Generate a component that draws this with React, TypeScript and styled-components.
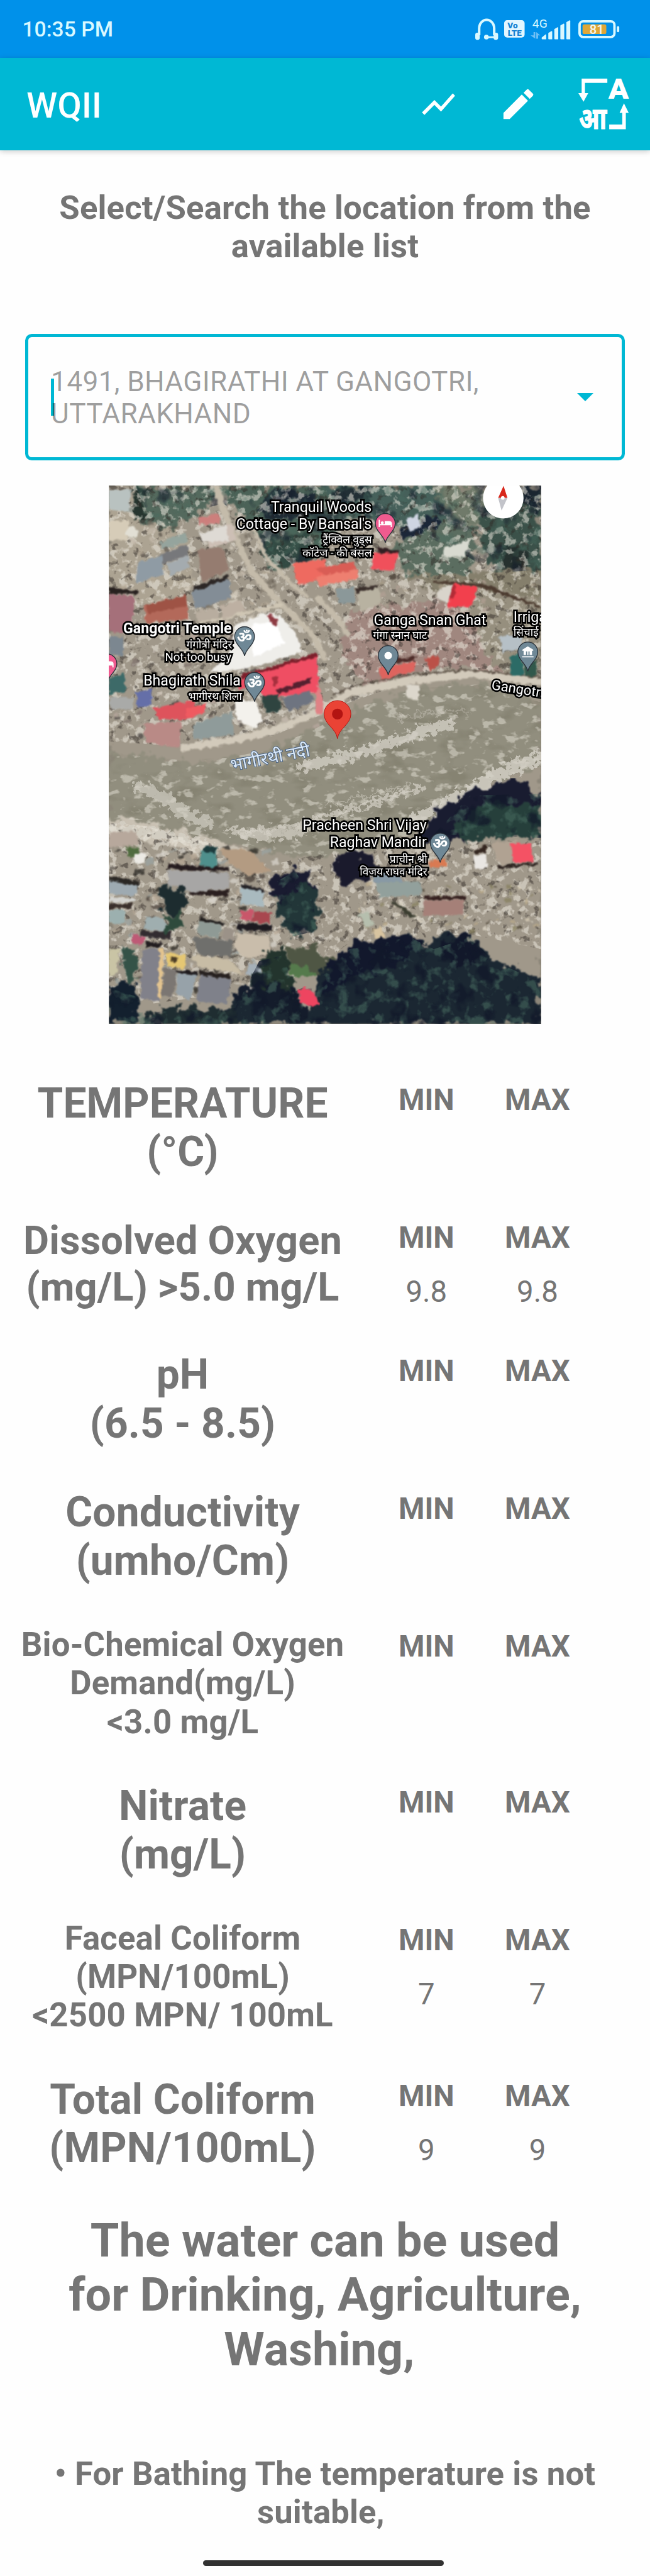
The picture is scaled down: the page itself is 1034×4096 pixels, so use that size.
import React from "react";
import styled, { createGlobalStyle, css } from "styled-components";

/* Every length is given in device pixels of a 1080 wide phone and scaled to the page. */
const SCALE = 1034 / 1080;
const u = (n: number) => `${+(n * SCALE).toFixed(3)}px`;

const sans = `Roboto, "Noto Sans", "Noto Sans Devanagari", "Lohit Devanagari", sans-serif`;

const GlobalStyle = createGlobalStyle`
  html, body { margin: 0; padding: 0; background: #fefefe; }
  body { font-family: ${sans}; color: #757575; }
`;

const Page = styled.main`
  display: flex;
  flex-direction: column;
  align-items: center;
  width: 1034px;
  height: 4096px;
  overflow: hidden;
  background: #fefefe;
`;

/* ---------- bars ---------- */

const StatusBar = styled.header`
  box-sizing: border-box;
  display: flex;
  align-items: center;
  justify-content: space-between;
  align-self: stretch;
  flex: none;
  height: ${u(96)};
  padding: 0 ${u(51)} 0 ${u(37)};
  background: #0091ea;
  color: #d9f8ff;
`;

const Clock = styled.span`
  padding-top: ${u(1)};
  font-size: ${u(35)};
  font-weight: 500;
  line-height: 1;
  letter-spacing: ${u(0.1)};
`;

const StatusIcons = styled.div`
  display: flex;
  align-items: center;
  gap: ${u(10)};
`;

const Glyph = styled.svg<{ $w: number; $h: number }>`
  display: block;
  flex: none;
  width: ${(p) => u(p.$w)};
  height: ${(p) => u(p.$h)};
  overflow: visible;
`;

const AppBar = styled.nav`
  box-sizing: border-box;
  display: flex;
  align-items: center;
  align-self: stretch;
  flex: none;
  height: ${u(154)};
  padding: 0 ${u(35.5)} 0 ${u(44)};
  background: #00b8d4;
  color: #fff;
  box-shadow: 0 ${u(2)} ${u(9)} rgba(0, 0, 0, 0.2);
`;

const Title = styled.h1`
  flex: 1;
  margin: 0;
  padding-top: ${u(6)};
  font-size: ${u(58)};
  font-weight: 500;
  line-height: 1.17;
  letter-spacing: ${u(0.4)};
`;

const Actions = styled.div`
  display: flex;
  align-items: center;
  gap: ${u(66.5)};
`;

/* ---------- search ---------- */

const Prompt = styled.h2`
  width: ${u(960)};
  margin: ${u(63)} 0 ${u(114)};
  font-size: ${u(55)};
  font-weight: 700;
  line-height: ${u(64)};
  letter-spacing: ${u(0.18)};
  text-align: center;
`;

const Field = styled.div`
  box-sizing: border-box;
  position: relative;
  display: flex;
  align-items: center;
  justify-content: space-between;
  flex: none;
  width: ${u(997)};
  height: ${u(210)};
  padding: 0 ${u(47)} 0 ${u(38)};
  border: ${u(5.5)} solid #00b8d4;
  border-radius: ${u(11)};
`;

const Hint = styled.span`
  position: relative;
  width: ${u(780)};
  padding-top: ${u(3)};
  font-size: ${u(46.3)};
  line-height: ${u(54)};
  letter-spacing: ${u(0.3)};
  color: rgba(0, 0, 0, 0.38);
`;

const Caret = styled.i`
  position: absolute;
  left: ${u(38)};
  top: ${u(68.5)};
  width: ${u(5.5)};
  height: ${u(62)};
  background: #00b8d4;
`;

const Arrow = styled.i`
  width: 0;
  height: 0;
  border: ${u(13.75)} solid transparent;
  border-top-color: #00b8d4;
  border-bottom-width: 0;
`;

/* ---------- map ---------- */

const MapFrame = styled.section`
  position: relative;
  flex: none;
  width: ${u(718)};
  height: ${u(894)};
  margin: ${u(41)} 0 ${u(92)};
  overflow: hidden;
  background: #8d877a;
`;

const MapLabel = styled.span<{
  $left?: number;
  $right?: number;
  $base: number;
  $size: number;
  $weight?: number;
  $turn?: number;
  $river?: boolean;
}>`
  position: absolute;
  ${(p) =>
    p.$right !== undefined
      ? css`right: ${u(718 - p.$right)};`
      : css`left: ${u(p.$left ?? 0)};`}
  top: ${(p) => u(p.$base - 0.9277 * p.$size)};
  font-size: ${(p) => u(p.$size)};
  font-weight: ${(p) => p.$weight ?? 400};
  line-height: 1.1719;
  white-space: nowrap;
  color: ${(p) => (p.$river ? "#dcebfb" : "#fff")};
  -webkit-text-stroke: ${(p) => (p.$river ? `${u(2)} #4a6282` : `${u(5.5)} #000`)};
  paint-order: stroke fill;
  stroke-linejoin: round;
  transform-origin: 0 80%;
  transform: rotate(${(p) => p.$turn ?? 0}deg);
`;

/* ---------- readings ---------- */

const Readings = styled.section`
  display: flex;
  flex-direction: column;
  align-self: stretch;
  gap: ${u(67)};
`;

const Row = styled.article`
  display: grid;
  grid-template-columns: ${u(607)} ${u(203)} ${u(166)};
  align-items: start;
`;

const Label = styled.h3<{ $size: number; $line: number }>`
  margin: 0;
  font-size: ${(p) => u(p.$size)};
  line-height: ${(p) => u(p.$line)};
  font-weight: 700;
  letter-spacing: ${u(0.15)};
  text-align: center;
  white-space: pre;
`;

const Column = styled.div`
  display: flex;
  flex-direction: column;
  align-items: center;
  gap: ${u(32)};
  padding-top: ${u(6.5)};
  font-size: ${u(49.5)};
  line-height: ${u(58)};
  height: ${u(148)};
  box-sizing: border-box;
`;

const Head = styled.strong`
  font-weight: 700;
`;

/* ---------- verdict ---------- */

const Verdict = styled.p<{ $size: number; $line: number; $top: number; $track?: number }>`
  flex: none;
  margin: ${(p) => u(p.$top)} 0 0;
  font-size: ${(p) => u(p.$size)};
  line-height: ${(p) => u(p.$line)};
  font-weight: 700;
  letter-spacing: ${(p) => u(p.$track ?? 0)};
  text-align: center;
  white-space: pre;
`;

const HomeBar = styled.div`
  flex: none;
  width: ${u(400)};
  height: ${u(10)};
  margin: ${u(46.5)} ${u(6)} 0 0;
  border-radius: ${u(5)};
  background: #313131;
`;

/* ---------- icons ---------- */

const Headset = () => (
  <Glyph $w={38} $h={36} viewBox="0 0 38 36">
    <path d="M6.500 28V17a12.500 14.500 0 0 1 25 0V28" fill="none" stroke="#d9f8ff" strokeWidth="4.200" />
    <rect x="0" y="24" width="7.500" height="12" rx="3.500" fill="#d9f8ff" />
    <rect x="30.500" y="24" width="7.500" height="12" rx="3.500" fill="#d9f8ff" />
    <path d="M19 31.500H33" stroke="#d9f8ff" strokeWidth="3" />
    <circle cx="18.500" cy="31.300" r="4" fill="#d9f8ff" />
  </Glyph>
);

const Volte = () => (
  <Glyph $w={34} $h={29} viewBox="0 0 34 29">
    <rect width="34" height="29" rx="5" fill="#e3f6ff" />
    <g fill="#1683d3" fontFamily={sans} fontWeight="900" fontSize="13">
      <text x="5.500" y="13.500" textLength="17" lengthAdjust="spacingAndGlyphs">Vo</text>
      <text x="6" y="26" textLength="23" lengthAdjust="spacingAndGlyphs">LTE</text>
    </g>
  </Glyph>
);

const Signal = () => (
  <Glyph $w={69.8} $h={34} viewBox="0 0 69.8 34">
    <text x="3" y="15" fontFamily={sans} fontSize="20" fill="#d9f8ff" textLength="25" lengthAdjust="spacingAndGlyphs">4G</text>
    <g fill="#6fc0f5">
      <path d="M5 22h2.800v11L0 27.500h5z" />
      <path d="M9.500 22l6.500 5.500h-3.500V33H9.500z" />
    </g>
    <g fill="#d9f8ff">
      <path d="M18.500 31l6-5q1.500-1 1.500 1v7H19.500q-1 0-1-1z" />
      <path d="M29.500 23.500l5-3q1.500-.5 1.500 1V34H30.500q-1 0-1-1z" />
      <path d="M39.500 17l5-3q1.500-.5 1.500 1V34H40.500q-1 0-1-1z" />
      <path d="M49.500 11l5-3q1.500-.5 1.500 1V34H50.500q-1 0-1-1z" />
      <path d="M59.500 5.500l5-3q1.500-.5 1.500 1V34H60.500q-1 0-1-1z" />
    </g>
  </Glyph>
);

const Battery = () => (
  <Glyph $w={68} $h={30} viewBox="0 0 68 30">
    <rect x="2" y="2" width="58" height="26" rx="6" fill="none" stroke="#d9f8ff" strokeWidth="4" />
    <rect x="7" y="7" width="39.500" height="16" rx="3" fill="#dfa737" />
    <rect x="64" y="10" width="4" height="10" rx="2" fill="#d9f8ff" />
    <text x="18.500" y="23.500" fontFamily={sans} fontWeight="500" fontSize="22" fill="#f3f6ee" textLength="24" lengthAdjust="spacingAndGlyphs">81</text>
  </Glyph>
);

const Trend = () => (
  <Glyph $w={66} $h={66} viewBox="0 0 24 24">
    <path fill="#fff" d="M3.500 18.490l6-6.010 4 4L22 6.920l-1.410-1.410-7.090 7.970-4-4L2 16.990z" />
  </Glyph>
);

const Pencil = () => (
  <Glyph $w={66} $h={66} viewBox="0 0 24 24">
    <path fill="#fff" d="M3 17.250V21h3.750L17.810 9.940l-3.750-3.750L3 17.250zM20.710 7.040a.996.996 0 0 0 0-1.410l-2.340-2.340a.996.996 0 0 0-1.410 0l-1.830 1.830 3.750 3.750 1.830-1.830z" />
  </Glyph>
);

const Translate = () => (
  <Glyph $w={84} $h={84} viewBox="0 0 84 84">
    <g fill="#fff">
      <path d="M5.500 0H48.200V7H11V24H16.500L8.600 38.300 0 24H5.500z" />
      <path d="M75.800 41L83.700 57H78.900V84H51.300V76.300H73V57H68.500z" />
      <text x="50" y="33" fontFamily={sans} fontWeight="900" fontSize="46.500" textLength="34" lengthAdjust="spacingAndGlyphs">A</text>
      <text x="1" y="83.500" fontFamily={sans} fontWeight="700" fontSize="51" stroke="#fff" strokeWidth="1.200" textLength="46" lengthAdjust="spacingAndGlyphs">आ</text>
    </g>
  </Glyph>
);

/* ---------- terrain ---------- */

type Shape = [fill: string, points: string];

const GROUND: Shape[] = [
  ["#a0988a", "0,0 718,0 718,894 0,894"],
  ["#aca392", "0,20 60,30 130,80 140,180 60,200 0,190"],
  ["#54695d", "40,0 190,0 150,50 90,70 50,60"],
  ["#26352f", "40,0 62,0 60,50 44,62 36,40"],
  ["#4b6257", "190,0 420,0 400,60 330,130 270,140 235,60 200,30"],
  ["#1f2b35", "262,8 300,2 345,20 330,60 275,62 250,40"],
  ["#334a43", "255,90 330,80 345,120 290,140 262,120"],
  ["#46605a", "345,0 620,0 600,60 470,70 400,50"],
  ["#222f35", "372,4 440,0 430,28 380,30"],
  ["#1c2738", "488,68 540,50 560,70 530,100 510,105 486,90"],
  ["#5b6d60", "470,100 560,60 610,70 600,150 500,150"],
  ["#707a6a", "540,0 620,0 640,60 580,70"],
  ["#3b5149", "625,30 718,0 718,150 640,140 615,80"],
  ["#1a2530", "690,0 718,0 718,40 688,30"],
  ["#26312f", "648,110 680,100 700,120 690,145 655,145"],
  ["#857f6c", "480,150 718,140 718,210 560,180"],
  ["#a0877f", "400,205 560,190 640,230 660,310 560,300 420,330 390,280"],
  ["#968f7e", "590,160 718,190 718,330 640,300 610,240"],
  ["#c9c1b3", "0,545 90,560 190,590 250,620 160,610 60,590 0,580"],
];

const WATER_EDGE =
  "0,442 60,450 120,456 200,452 260,440 330,410 420,366 520,336 620,330 718,360 718,466 640,490 560,540 500,580 430,610 330,618 250,606 190,590 120,575 50,556 0,552";

const WATER: Shape[] = [["#918e7e", WATER_EDGE]];

/* Gravel bars and banks along the stream: path, width, opacity. */
const BARS: [string, number, number][] = [
  ["M322 466Q420 446 490 420T565 396", 17, 0.75],
  ["M52 503Q90 512 110 532T165 560", 20, 0.65],
  ["M196 572Q260 580 340 556T520 502", 9, 0.7],
  ["M225 578Q270 588 330 572", 14, 0.7],
  ["M508 556Q590 516 630 490T718 452", 20, 0.8],
  ["M0 570Q80 572 170 600", 14, 0.7],
  ["M360 530Q440 512 500 498", 4, 0.45],
  ["M480 386Q540 372 600 376", 5, 0.35],
];

const BUILDINGS: Shape[] = [
  ["#b9c2c0", "0,8 38,6 34,44 0,40"],
  ["#d6ccb8", "0,60 34,56 30,90 0,92"],
  ["#cdbfb5", "160,80 205,62 212,90 168,104"],
  ["#cc7f7c", "150,54 182,46 186,62 150,66"],
  ["#dedad4", "152,80 195,66 200,92 155,94"],
  ["#e2dfd4", "30,72 42,68 50,76 46,86 34,86 28,80"],
  ["#95a49d", "86,94 128,78 132,92 90,106"],
  ["#77787b", "84,116 130,98 132,116 90,130"],
  ["#8f9ba4", "48,128 88,116 92,148 46,162"],
  ["#a4abaf", "96,130 132,116 134,134 104,150"],
  ["#957c70", "148,106 190,104 200,140 155,160"],
  ["#2c2726", "140,168 199,148 200,156 140,176"],
  ["#838d96", "138,176 200,156 204,186 144,206"],
  ["#b8ad9f", "144,210 180,202 184,220 148,226"],
  ["#bdb0a2", "186,200 220,190 226,208 190,222"],
  ["#28211f", "0,168 50,176 45,182 0,180"],
  ["#a5707a", "0,180 44,184 36,246 0,242"],
  ["#b3695a", "58,200 130,190 132,222 62,228"],
  ["#9e5345", "62,198 128,182 130,200 64,212"],
  ["#7c8790", "2,252 24,250 24,284 0,280"],
  ["#efeeea", "210,232 258,212 285,216 312,246 322,276 262,296 215,306 168,310 200,280"],
  ["#ffffff", "236,232 276,226 292,262 240,286"],
  ["#8d3b42", "262,214 282,220 276,234"],
  ["#7d1f2b", "218,316 344,278 346,284 222,322"],
  ["#ef4e63", "214,322 346,284 350,350 336,342 300,348 262,354 240,330 216,340"],
  ["#a6303e", "272,320 280,316 282,330 274,334"],
  ["#55202f", "280,340 336,320 336,328 282,347"],
  ["#6e7480", "288,352 335,340 342,356 300,376"],
  ["#2f4440", "252,350 280,346 288,372 262,380"],
  ["#f3f1ec", "208,356 244,358 256,392 244,402 212,388"],
  ["#656fa8", "44,344 70,338 72,364 50,370"],
  ["#a9aaa8", "0,352 42,352 40,374 4,370"],
  ["#de535c", "74,370 140,356 146,380 130,388 84,388"],
  ["#ef5a60", "128,372 164,360 160,378 130,386"],
  ["#8f9b9a", "140,396 206,376 208,414 140,422"],
  ["#b98a86", "60,396 120,392 118,436 60,426"],
  ["#3d6a68", "0,320 26,312 28,344 0,346"],
  ["#ee6a60", "305,130 360,122 362,152 314,166"],
  ["#d95d55", "345,138 405,126 412,138 360,152"],
  ["#ee7f70", "345,152 414,138 414,154 350,168"],
  ["#321f22", "450,104 482,108 480,114 446,112"],
  ["#f0505b", "440,112 480,112 474,142 436,138"],
  ["#3a2f2b", "410,172 448,164 446,170 412,178"],
  ["#b8b2a1", "412,178 448,170 454,194 420,210"],
  ["#8b9899", "378,172 408,168 410,194 382,196"],
  ["#f2404d", "574,164 614,168 604,200 562,202"],
  ["#b32b36", "570,166 576,162 574,188 566,186"],
  ["#d9d4cb", "548,172 572,164 564,198 546,188"],
  ["#d8dad0", "556,104 600,90 592,118 556,118"],
  ["#cfd5e2", "494,56 514,48 518,70 500,76"],
  ["#4c2b28", "476,288 510,284 508,292 476,294"],
  ["#dd645e", "448,302 510,292 508,308 452,322"],
  ["#bb5148", "524,286 546,282 550,296 534,308"],
  ["#dcd7cc", "494,330 516,332 516,356 496,354"],
  ["#b6c0c6", "650,250 690,248 684,272 652,276"],
  ["#2c6b66", "668,284 684,278 690,314 668,316"],
  ["#31584b", "690,296 712,290 710,316 692,316"],
  ["#4b3a2f", "540,158 620,162 718,200 718,204 612,167 540,161"],
  ["#df8285", "345,330 352,340 356,376 345,380"],
  ["#b7a89c", "0,575 45,575 50,598 0,600"],
  ["#4f6b3e", "30,600 50,600 50,618 32,616"],
  ["#eceae4", "42,612 60,610 60,628 44,628"],
  ["#251c1f", "98,628 150,632 200,634 200,640 98,638"],
  ["#4f8f8c", "154,606 180,600 180,634 152,632"],
  ["#1d3a3c", "160,598 180,600 178,612 158,608"],
  ["#b39b82", "184,604 230,604 270,640 230,648 200,626"],
  ["#a7a6a5", "98,640 150,640 200,644 200,668 140,676 98,660"],
  ["#2a1f1f", "134,676 200,670 198,682 140,680"],
  ["#9eaab1", "0,656 50,662 44,682 0,678"],
  ["#2a2724", "0,648 50,658 48,664 0,656"],
  ["#d4d4d0", "0,684 44,686 40,692 0,692"],
  ["#392f2b", "0,694 40,694 36,702 0,702"],
  ["#9cb0af", "0,704 28,706 28,728 0,726"],
  ["#9faeaf", "62,716 90,718 104,740 58,738"],
  ["#322c30", "54,740 104,740 104,754 52,748"],
  ["#232125", "218,662 258,670 258,676 220,672"],
  ["#a9babf", "218,668 256,674 258,700 220,694"],
  ["#c9576a", "220,706 240,704 240,724 218,720"],
  ["#a8474f", "242,706 270,710 268,728 240,724"],
  ["#1d1a20", "212,726 272,730 270,740 214,738"],
  ["#c9bdab", "212,744 266,748 270,778 228,786 210,770"],
  ["#1f1c1c", "152,716 192,726 190,732 150,722"],
  ["#8f9a95", "150,722 188,732 182,752 146,744"],
  ["#9b9288", "192,734 210,738 206,760 188,752"],
  ["#6f6f6c", "140,750 205,756 204,782 150,780"],
  ["#be5a76", "38,746 60,750 56,766 40,760"],
  ["#211c1f", "62,756 88,760 84,768 60,766"],
  ["#81818a", "56,770 86,770 84,856 52,852"],
  ["#e3c48f", "84,770 92,770 88,850 82,850"],
  ["#e5c773", "96,776 128,780 126,802 96,798"],
  ["#4a3c26", "102,782 114,784 110,792 102,790"],
  ["#7b7672", "92,800 112,804 106,850 88,846"],
  ["#97a2a9", "114,806 146,812 136,856 110,840"],
  ["#1f1b1d", "110,804 146,808 148,814 112,810"],
  ["#26201f", "150,806 200,812 204,820 150,814"],
  ["#7f818a", "152,814 204,820 196,862 144,856"],
  ["#a5b0b8", "232,792 256,800 252,820 228,812"],
  ["#c7bca5", "136,780 200,786 220,810 150,800"],
  ["#c9c4a5", "0,770 18,768 14,810 0,816"],
  ["#a58078", "524,688 590,688 590,712 522,714"],
  ["#34201f", "524,682 594,682 594,687 524,687"],
  ["#92a09c", "440,655 516,658 520,680 450,684"],
  ["#8899a5", "440,640 480,644 490,658 440,660"],
  ["#e9e6e2", "606,614 626,612 628,636 608,636"],
  ["#b0a292", "636,594 680,590 670,628 650,630"],
  ["#f45264", "666,594 702,594 706,624 674,628"],
  ["#2d2320", "646,632 712,626 712,630 648,636"],
  ["#33251f", "606,606 628,596 626,610 608,612"],
  ["#d97a52", "532,624 560,620 560,632 534,636"],
  ["#b6bfae", "414,712 432,708 440,730 428,734"],
  ["#d8c4a0", "440,736 452,732 460,752 444,754"],
  ["#3b3d30", "470,690 482,694 512,716 500,718"],
];

const WOODS: Shape[] = [
  ["#191b30", "268,664 284,644 304,636 328,640 342,664 332,694 300,704 276,690"],
  ["#223638", "274,690 336,660 350,700 344,736 316,750 290,740"],
  ["#1a1a2c", "376,618 398,608 436,614 452,634 430,656 390,660 376,644"],
  ["#1d2c2f", "84,668 124,666 128,700 110,722 88,700"],
  ["#2e4a3c", "92,716 124,706 116,738 96,742"],
  ["#191c30", "536,556 556,528 600,508 640,502 652,490 676,486 694,494 704,510 718,508 718,586 660,580 600,588 540,592 516,584"],
  ["#263f3b", "570,570 620,530 718,530 718,584 640,584 590,590"],
  ["#4f5644", "290,766 345,768 372,790 350,816 300,806"],
  ["#557a4c", "300,796 330,800 340,814 310,818"],
  ["#23342d", "258,778 286,768 304,810 300,894 226,894 236,830"],
  ["#141c2b", "214,836 280,824 330,860 330,894 200,894"],
  ["#1b2732", "344,812 400,768 460,756 500,744 524,770 556,744 600,748 640,790 718,820 718,894 120,894 136,868 200,870 236,850 320,894 340,860"],
  ["#12182c", "366,792 410,760 480,748 506,746 516,770 470,800 400,820 356,846"],
  ["#12182a", "560,754 590,742 612,762 618,788 580,800 552,780"],
  ["#1f2d31", "70,872 120,866 200,872 220,894 60,894"],
  ["#345247", "20,772 48,770 46,820 30,824"],
  ["#13202e", "0,826 36,824 50,852 48,894 0,894"],
];

const UPPER_LAND = "0,0 718,0 718,335 620,305 500,325 400,360 275,415 150,435 0,425";
const LOWER_LAND = "0,560 60,565 190,600 270,630 400,600 500,590 718,590 718,770 600,745 400,760 300,830 0,870";
const FOREST_TOP = "44,0 718,0 718,140 640,145 600,120 540,90 470,50 400,56 340,130 262,130 235,60 190,30 150,40 70,54";
const FOREST_LOW = [
  "275,660 310,640 340,690 345,740 300,750",
  "350,820 400,770 500,750 540,770 600,750 640,790 718,825 718,894 0,894 0,834 50,850 60,875 210,868 250,790 290,780 310,840",
  "540,580 600,515 718,512 718,585",
];

/* Small deterministic generator for rooftops between the large buildings. */
const seeded = (seed: number) => () => {
  seed = (seed * 16807) % 2147483647;
  return seed / 2147483647;
};

type Scatter = { x: number; y: number; w: number; h: number; n: number; size: number; tones: string[] };

const SCATTER: Scatter[] = [
  { x: 0, y: 60, w: 270, h: 180, n: 60, size: 12, tones: ["#d9d1c3", "#5a534a", "#b5a997", "#c4b9ab", "#766d61"] },
  { x: 0, y: 240, w: 350, h: 190, n: 80, size: 10, tones: ["#e3ddd2", "#4d4845", "#b7a79e", "#7c6f6a", "#c8bdb1"] },
  { x: 400, y: 150, w: 318, h: 60, n: 30, size: 9, tones: ["#d2cabb", "#54493f", "#b09f93", "#a59a86"] },
  { x: 0, y: 600, w: 280, h: 250, n: 120, size: 13, tones: ["#d8d4cc", "#26231f", "#9aa3a1", "#b7a895", "#463c36"] },
  { x: 400, y: 660, w: 318, h: 80, n: 60, size: 9, tones: ["#d8cdb8", "#4a4133", "#b9a98a", "#87805f", "#e4ddcd"] },
];

const scattered = SCATTER.flatMap((s, k) => {
  const r = seeded(977 + k * 131);
  return Array.from({ length: s.n }, () => {
    const w = 3 + r() * s.size;
    const h = 2 + r() * s.size * 0.6;
    return { x: s.x + r() * s.w, y: s.y + r() * s.h, w, h, t: -22 + r() * 14, c: s.tones[Math.floor(r() * s.tones.length)] };
  });
});

const Polys = ({ set }: { set: Shape[] }) => (
  <>
    {set.map(([fill, points], i) => (
      <polygon key={i} fill={fill} points={points} />
    ))}
  </>
);

type SpeckleProps = { id: string; freq: string; seed: number; rgb: [number, number, number]; gain: number; cut: number };

/* Noise cut at a threshold: leaves irregular blobs of one colour. */
const SpeckleFilter = ({ id, freq, seed, rgb, gain, cut }: SpeckleProps) => (
  <filter id={id} x="0" y="0" width="100%" height="100%" colorInterpolationFilters="sRGB">
    <feTurbulence type="fractalNoise" baseFrequency={freq} numOctaves="3" seed={seed} />
    <feColorMatrix
      values={`0 0 0 0 ${rgb[0] / 255} 0 0 0 0 ${rgb[1] / 255} 0 0 0 0 ${rgb[2] / 255} ${gain} 0 0 0 ${-gain * cut}`}
    />
    <feGaussianBlur stdDeviation="0.700" />
  </filter>
);

const Wash = ({ filter, clip, opacity }: { filter: string; clip: string; opacity: number }) => (
  <g clipPath={`url(#${clip})`}>
    <rect width="718" height="894" filter={`url(#${filter})`} opacity={opacity} />
  </g>
);

const Terrain = () => (
  <Glyph $w={718} $h={894} viewBox="0 0 718 894">
    <defs>
      <filter id="rough" x="0" y="0" width="100%" height="100%" colorInterpolationFilters="sRGB">
        <feTurbulence type="fractalNoise" baseFrequency="0.060" numOctaves="4" seed="8" result="n" />
        <feDisplacementMap in="SourceGraphic" in2="n" scale="34" xChannelSelector="R" yChannelSelector="G" />
        <feGaussianBlur stdDeviation="1.300" />
      </filter>
      <filter id="ragged" x="-5%" y="-5%" width="110%" height="110%" colorInterpolationFilters="sRGB">
        <feTurbulence type="fractalNoise" baseFrequency="0.110" numOctaves="3" seed="14" result="n" />
        <feDisplacementMap in="SourceGraphic" in2="n" scale="30" xChannelSelector="R" yChannelSelector="G" />
        <feGaussianBlur stdDeviation="0.800" />
      </filter>
      <filter id="crisp" x="0" y="0" width="100%" height="100%" colorInterpolationFilters="sRGB">
        <feTurbulence type="fractalNoise" baseFrequency="0.120" numOctaves="2" seed="3" result="n" />
        <feDisplacementMap in="SourceGraphic" in2="n" scale="9" xChannelSelector="R" yChannelSelector="G" />
        <feGaussianBlur stdDeviation="0.900" />
      </filter>
      <SpeckleFilter id="pale" freq="0.070" seed={21} rgb={[236, 231, 220]} gain={7} cut={0.52} />
      <SpeckleFilter id="dark" freq="0.075" seed={5} rgb={[48, 42, 38]} gain={7} cut={0.6} />
      <SpeckleFilter id="foam" freq="0.050 0.075" seed={12} rgb={[216, 212, 200]} gain={7} cut={0.57} />
      <SpeckleFilter id="silt" freq="0.020 0.040" seed={31} rgb={[118, 115, 98]} gain={4} cut={0.52} />
      <SpeckleFilter id="leaf" freq="0.050" seed={17} rgb={[74, 110, 98]} gain={5} cut={0.52} />
      <SpeckleFilter id="shade" freq="0.030" seed={44} rgb={[18, 25, 42]} gain={6} cut={0.54} />
      <clipPath id="land">
        <polygon points={UPPER_LAND} />
        <polygon points={LOWER_LAND} />
      </clipPath>
      <clipPath id="river"><polygon points={WATER_EDGE} /></clipPath>
      <clipPath id="canopy"><polygon points={FOREST_TOP} /></clipPath>
      <clipPath id="grove">{FOREST_LOW.map((p) => <polygon key={p} points={p} />)}</clipPath>
    </defs>
    <rect width="718" height="894" fill="#8d877a" />
    <g filter="url(#rough)">
      <Polys set={GROUND} />
      <Polys set={WATER} />
    </g>
    <Wash filter="silt" clip="river" opacity={0.4} />
    <Wash filter="foam" clip="river" opacity={0.6} />
    <g filter="url(#ragged)" fill="none" stroke="#d6d2c8" strokeLinecap="round">
      {BARS.map(([d, w, o]) => (
        <path key={d} d={d} strokeWidth={w} opacity={o} />
      ))}
    </g>
    <Wash filter="pale" clip="land" opacity={0.55} />
    <Wash filter="dark" clip="land" opacity={0.5} />
    <Wash filter="leaf" clip="canopy" opacity={0.4} />
    <Wash filter="shade" clip="canopy" opacity={0.5} />
    <g filter="url(#crisp)">
      {scattered.map((s, i) => (
        <rect key={i} x={s.x} y={s.y} width={s.w} height={s.h} fill={s.c} opacity="0.750" transform={`rotate(${s.t} ${s.x} ${s.y})`} />
      ))}
      <g fill="none" stroke="#c4bbaa" strokeWidth="10" strokeLinejoin="round">
        <path d="M178 0L190 40 208 80 236 140 270 180 300 210 340 250 360 290" />
        <path d="M235 60L262 120 300 160 330 185" strokeWidth="6" />
        <path d="M345 185L372 212 400 250" strokeWidth="9" />
        <path d="M120 436L200 424 270 408 330 384 372 362 400 344 500 324 600 313 718 326" stroke="#d2cabb" strokeWidth="12" />
        <path d="M372 348L410 332 500 314 600 306 718 318" stroke="#4b4036" strokeWidth="2.500" opacity="0.800" />
      </g>
      <path d="M150 228L290 198" stroke="#cfc6b4" strokeWidth="5" />
      <Polys set={BUILDINGS} />
    </g>
    <g filter="url(#rough)">
      <Polys set={WOODS} />
    </g>
    <Wash filter="leaf" clip="grove" opacity={0.55} />
    <Wash filter="shade" clip="grove" opacity={0.75} />
    <g filter="url(#crisp)">
      <polygon points="314,838 326,832 340,840 350,862 338,866 318,858" fill="#ee4560" />
    </g>
  </Glyph>
);

/* ---------- pins ---------- */

const MapOverlay = styled.div`
  position: absolute;
  inset: 0;
`;

const Pin = ({ x, y, fill, children }: { x: number; y: number; fill: string; children?: React.ReactNode }) => (
  <g transform={`translate(${x} ${y})`}>
    <path d="M0 32C-2 20-16.500 13-16.500 0a16.500 16.500 0 0 1 33 0C16.500 13 2 20 0 32z" fill={fill} stroke="#2b333b" strokeWidth="1.400" />
    {children}
  </g>
);

const Om = () => (
  <text y="9" textAnchor="middle" fontFamily={sans} fontSize="25" fontWeight="700" fill="#fff">ॐ</text>
);

const Bed = () => (
  <path d="M-11-6h2v7H-1v-5H6q5 0 5 4V6h-2V3H-9V6h-2zM-5-3.500a2.400 2.400 0 1 1-.01 0z" fill="#fff" />
);

const Pins = () => (
  <Glyph $w={718} $h={894} viewBox="0 0 718 894">
    <Pin x={459.5} y={63} fill="#ef5b8f"><Bed /></Pin>
    <Pin x={-3} y={296} fill="#ef5b8f"><Bed /></Pin>
    <Pin x={225.700} y={251} fill="#6f8896"><Om /></Pin>
    <Pin x={242.300} y={327} fill="#6f8896"><Om /></Pin>
    <Pin x={550.700} y={594} fill="#6f8896"><Om /></Pin>
    <Pin x={464.300} y={282.500} fill="#6f8896"><circle r="6.300" fill="#fff" /></Pin>
    <Pin x={696.300} y={276.500} fill="#6f8896">
      <path d="M-9-4L0-9.500 9-4V-2H7V5H3V-1H1V5H-1V-1H-3V5H-7V-2H-9zM-9.500 7h19v2h-19z" fill="#fff" />
    </Pin>
    <g transform="translate(380 379.500)">
      <path d="M0 41C-2 24-22.300 17-22.300 0a22.300 22.300 0 0 1 44.600 0C22.300 17 2 24 0 41z" fill="#ea4335" stroke="#b31412" strokeWidth="1" />
      <circle r="9" fill="#b31412" />
    </g>
    <circle cx="655.500" cy="21" r="33.700" fill="#fff" />
    <path d="M656 0.500L662.500 20.500H647z" fill="#d8281c" />
    <path d="M647 20.500H662.500L652.700 41.500z" fill="#c3c4ca" />
    <circle cx="654.700" cy="20.500" r="3" fill="#fff" />
  </Glyph>
);

const SatelliteMap = () => (
  <MapFrame>
    <Terrain />
    <MapOverlay>
      <Pins />
    </MapOverlay>
    <MapLabel $right={436.500} $base={44.700} $size={24.2}>Tranquil Woods</MapLabel>
    <MapLabel $right={436.500} $base={73.300} $size={24.2}>Cottage - By Bansal's</MapLabel>
    <MapLabel $right={437} $base={96.700} $size={18}>ट्रैंक्विल वुड्स</MapLabel>
    <MapLabel $right={437} $base={118.700} $size={18.5}>कॉटेज - की बंसल</MapLabel>
    <MapLabel $right={204} $base={246.700} $size={24.2} $weight={700}>Gangotri Temple</MapLabel>
    <MapLabel $right={205} $base={270.700} $size={18}>गंगोत्री मंदिर</MapLabel>
    <MapLabel $right={203.500} $base={292.700} $size={19.500}>Not too busy</MapLabel>
    <MapLabel $right={219} $base={333.300} $size={24.2}>Bhagirath Shila</MapLabel>
    <MapLabel $right={221} $base={357} $size={18}>भागीरथ शिला</MapLabel>
    <MapLabel $left={440} $base={232.300} $size={24.2}>Ganga Snan Ghat</MapLabel>
    <MapLabel $left={439} $base={255.700} $size={18}>गंगा स्नान घाट</MapLabel>
    <MapLabel $left={672} $base={227.300} $size={24.2}>Irriga</MapLabel>
    <MapLabel $left={672} $base={249.700} $size={18}>सिंचाई</MapLabel>
    <MapLabel $left={634.500} $base={339} $size={23} $turn={9}>Gangotri</MapLabel>
    <MapLabel $left={204} $base={476} $size={28.5} $turn={-11} $river>भागीरथी नदी</MapLabel>
    <MapLabel $right={528} $base={573.300} $size={24.2}>Pracheen Shri Vijay</MapLabel>
    <MapLabel $right={528} $base={601.700} $size={24.2}>Raghav Mandir</MapLabel>
    <MapLabel $right={529} $base={626.700} $size={18}>प्राचीन श्री</MapLabel>
    <MapLabel $right={529} $base={648} $size={18}>विजय राघव मंदिर</MapLabel>
  </MapFrame>
);

/* ---------- data ---------- */

type Reading = { label: string; size: "s" | "m" | "l"; min?: string; max?: string };

const SIZES = { s: [55.1, 64], m: [66, 77.6], l: [68.75, 80.8] } as const;

const READINGS: Reading[] = [
  { label: "TEMPERATURE\n(°C)", size: "l" },
  { label: "Dissolved Oxygen\n(mg/L) >5.0 mg/L", size: "m", min: "9.8", max: "9.8" },
  { label: "pH\n(6.5 - 8.5)", size: "l" },
  { label: "Conductivity\n(umho/Cm)", size: "l" },
  { label: "Bio-Chemical Oxygen\nDemand(mg/L)\n<3.0 mg/L", size: "s" },
  { label: "Nitrate\n(mg/L)", size: "l" },
  { label: "Faceal Coliform\n(MPN/100mL)\n<2500 MPN/ 100mL", size: "s", min: "7", max: "7" },
  { label: "Total Coliform\n(MPN/100mL)", size: "l", min: "9", max: "9" },
];

export default function App() {
  return (
    <>
      <GlobalStyle />
      <Page>
        <StatusBar>
          <Clock>10:35 PM</Clock>
          <StatusIcons>
            <Headset />
            <Volte />
            <Signal />
            <Battery />
          </StatusIcons>
        </StatusBar>
        <AppBar>
          <Title>WQII</Title>
          <Actions>
            <Trend />
            <Pencil />
            <Translate />
          </Actions>
        </AppBar>

        <Prompt>Select/Search the location from the available list</Prompt>
        <Field>
          <Caret />
          <Hint>1491, BHAGIRATHI AT GANGOTRI, UTTARAKHAND</Hint>
          <Arrow />
        </Field>

        <SatelliteMap />

        <Readings>
          {READINGS.map((r) => (
            <Row key={r.label}>
              <Label $size={SIZES[r.size][0]} $line={SIZES[r.size][1]}>{r.label}</Label>
              <Column>
                <Head>MIN</Head>
                {r.min && <span>{r.min}</span>}
              </Column>
              <Column>
                <Head>MAX</Head>
                {r.max && <span>{r.max}</span>}
              </Column>
            </Row>
          ))}
        </Readings>

        <Verdict $size={77} $line={90.2} $top={68.3}>
          {"The water can be used\nfor Drinking, Agriculture,\nWashing,\u00a0"}
        </Verdict>
        <Verdict $size={55} $line={64.5} $top={129.2} $track={0.15}>
          {"• For Bathing The temperature is not\nsuitable,\u00a0"}
        </Verdict>
        <HomeBar />
      </Page>
    </>
  );
}
